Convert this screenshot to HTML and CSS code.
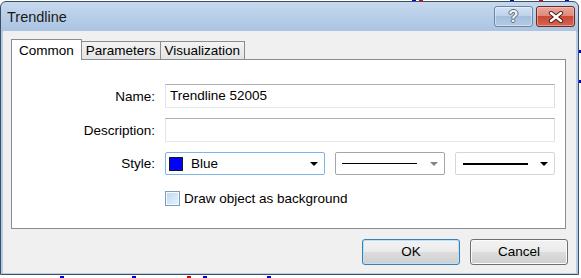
FILE: index.html
```html
<!DOCTYPE html>
<html lang="en">

<head>
  <meta charset="UTF-8">
  <title>Trendline</title>
  <link rel="stylesheet" href="styles.css">
</head>

<body>

  <!-- chart behind the dialog -->
  <div class="chart">
    <i class="mark blue" style="left:412px;top:0"></i>
    <i class="mark red" style="left:419px;top:0"></i>
    <i class="mark blue" style="left:510px;top:0"></i>
    <i class="mark red" style="left:539px;top:0"></i>
    <i class="mark blue" style="left:565px;top:0"></i>
    <i class="mark blue tick" style="left:579px;top:50px"></i>
    <i class="mark blue tick" style="left:579px;top:80px"></i>
    <i class="mark blue" style="left:60px;top:276px"></i>
    <i class="mark blue" style="left:132px;top:276px"></i>
    <i class="mark red" style="left:187px;top:276px"></i>
    <i class="mark blue" style="left:203px;top:276px"></i>
    <i class="mark blue" style="left:267px;top:276px"></i>
  </div>

  <div class="window">
    <div class="titlebar">
      <span class="title">Trendline</span>
      <div class="caption-buttons">
        <div class="cap-btn help">?</div>
        <div class="cap-btn close">
          <svg width="16" height="12" viewBox="0 0 16 12">
            <path d="M3 2 L13 10 M13 2 L3 10" stroke="#4b1a14" stroke-width="4.2" stroke-linecap="round" />
            <path d="M3 2 L13 10 M13 2 L3 10" stroke="#ffffff" stroke-width="2.4" stroke-linecap="round" />
          </svg>
        </div>
      </div>
    </div>

    <div class="client">
      <div class="tabs">
        <div class="tab active">Common</div>
        <div class="tab">Parameters</div>
        <div class="tab">Visualization</div>
      </div>

      <div class="panel">
        <div class="form">
          <label>Name:</label>
          <div class="input">Trendline 52005</div>

          <label>Description:</label>
          <div class="input"></div>

          <label>Style:</label>
          <div class="style-row">
            <div class="combo color-combo">
              <span class="swatch"></span>
              <span class="combo-text">Blue</span>
              <span class="arrow"></span>
            </div>
            <div class="combo width-combo">
              <span class="line thin"></span>
              <span class="arrow grey"></span>
            </div>
            <div class="combo line-combo">
              <span class="line thick"></span>
              <span class="arrow"></span>
            </div>
          </div>

          <div class="check">
            <span class="box"></span>
            <span>Draw object as background</span>
          </div>
        </div>
      </div>

      <div class="buttons">
        <div class="btn default">OK</div>
        <div class="btn">Cancel</div>
      </div>
    </div>
  </div>

</body>

</html>
```

FILE: styles.css
```css
body {
  margin: 0;
  background-color: #fff;
  font-family: "Liberation Sans", Arial, sans-serif;
  font-size: 13.5px;
  color: #000;
}

.chart {
  position: absolute;
  left: 0;
  top: 0;
  width: 581px;
  height: 278px;
}

.mark {
  position: absolute;
  width: 4px;
  height: 2px;
}

.mark.tick {
  width: 2px;
  height: 3px;
}

.blue {
  background-color: #0000e0;
}

.red {
  background-color: #e00000;
}

.window {
  position: relative;
  box-sizing: border-box;
  width: 579px;
  height: 274px;
  margin-top: 1px;
  padding: 0 2px 1px;
  display: flex;
  flex-direction: column;
  border: 1px solid #3e4f63;
  border-radius: 6px 6px 0 0;
  background: linear-gradient(#c6d9ee, #a9c3e1 30px, #b3cbe6 30px);
}

.titlebar {
  height: 29px;
  margin: 0 -2px;
  padding: 0 3px 0 6px;
  display: flex;
  justify-content: space-between;
  align-items: flex-start;
}

.title {
  font-size: 14.5px;
  line-height: 29px;
  padding-top: 1px;
  color: #1a1a1a;
}

.caption-buttons {
  display: flex;
  gap: 3px;
  margin-top: 4px;
}

.cap-btn {
  box-sizing: border-box;
  width: 39px;
  height: 21px;
  border-radius: 3px;
  display: flex;
  justify-content: center;
  align-items: center;
}

.help {
  border: 1px solid #6b84a4;
  background: linear-gradient(#d3e2f3, #bcd1ea 50%, #a4bedd 50%, #b4cbe5);
  box-shadow: inset 0 0 0 1px rgba(255, 255, 255, 0.4);
  color: #f4f4f4;
  font-weight: bold;
  font-size: 16px;
  text-shadow: -1px 0 #5d6b7c, 1px 0 #5d6b7c, 0 -1px #5d6b7c, 0 1px #5d6b7c;
}

.close {
  border: 1px solid #6e2a22;
  background: linear-gradient(#e9a89d, #de8677 50%, #c94a36 50%, #d46452);
  box-shadow: inset 0 0 0 1px rgba(255, 220, 210, 0.45);
}

.client {
  flex: 1;
  display: flex;
  flex-direction: column;
  padding: 8px 8px 8px 8px;
  background-color: #f0f0f0;
}

.tabs {
  height: 20px;
  display: flex;
  align-items: flex-end;
}

.tab {
  box-sizing: border-box;
  height: 18px;
  padding: 1px 4px 0;
  margin-left: -1px;
  line-height: 16px;
  border: 1px solid #898c95;
  border-bottom: none;
  background: linear-gradient(#f3f3f3, #e4e4e4);
}

.tab.active {
  position: relative;
  z-index: 1;
  height: 21px;
  margin-left: 0;
  margin-bottom: -1px;
  padding: 2px 7px 0;
  line-height: 17px;
  background: #fff;
}

.panel {
  height: 170px;
  box-sizing: border-box;
  margin-right: 2px;
  border: 1px solid #898c95;
  background-color: #fff;
}

.form {
  display: grid;
  grid-template-columns: 143px 390px;
  column-gap: 10px;
  row-gap: 10px;
  align-items: center;
  padding-top: 24px;
}

.form label {
  text-align: right;
}

.input {
  box-sizing: border-box;
  height: 24px;
  padding: 0 4px;
  line-height: 22px;
  border: 1px solid;
  border-color: #abadb3 #dbdfe6 #e3e9ef #e2e3ea;
}

.style-row {
  display: flex;
  gap: 10px;
}

.combo {
  box-sizing: border-box;
  height: 23px;
  display: flex;
  align-items: center;
  padding: 0 6px;
  border: 1px solid #d6d6d6;
  border-radius: 2px;
  background-color: #fff;
}

.color-combo {
  width: 160px;
  padding-left: 3px;
  border-color: #7eb4ea;
}

.width-combo {
  width: 110px;
  border-color: #a6a6a6;
}

.line-combo {
  width: 100px;
  padding-left: 7px;
}

.swatch {
  box-sizing: border-box;
  width: 14px;
  height: 14px;
  border: 1px solid #1a1a1a;
  background-color: #0000ff;
}

.combo-text {
  margin-left: 8px;
}

.line {
  background-color: #000;
}

.line.thin {
  width: 75px;
  height: 1px;
}

.line.thick {
  width: 65px;
  height: 2px;
}

.arrow {
  margin-left: auto;
  width: 0;
  height: 0;
  border-left: 4px solid transparent;
  border-right: 4px solid transparent;
  border-top: 4px solid #000;
}

.arrow.grey {
  border-top-color: #7f8590;
}

.check {
  grid-column: 2;
  margin-top: 6px;
  display: flex;
  align-items: center;
  gap: 4px;
}

.box {
  box-sizing: border-box;
  width: 15px;
  height: 15px;
  border: 1px solid #7a9ebe;
  background: linear-gradient(135deg, #bcd9f2, #e6f2fc);
  box-shadow: inset 0 0 0 1px #f4f9fd;
}

.buttons {
  display: flex;
  justify-content: flex-end;
  gap: 10px;
  margin-top: 10px;
}

.btn {
  box-sizing: border-box;
  width: 98px;
  height: 26px;
  line-height: 24px;
  text-align: center;
  border: 1px solid #707070;
  border-radius: 3px;
  background: linear-gradient(#f2f2f2, #ebebeb 50%, #dddddd 50%, #cfcfcf);
  box-shadow: inset 0 0 0 1px #fbfbfb;
}

.btn.default {
  border-color: #3c7fb1;
  box-shadow: inset 0 0 0 1px #b9e2f8;
}
```
